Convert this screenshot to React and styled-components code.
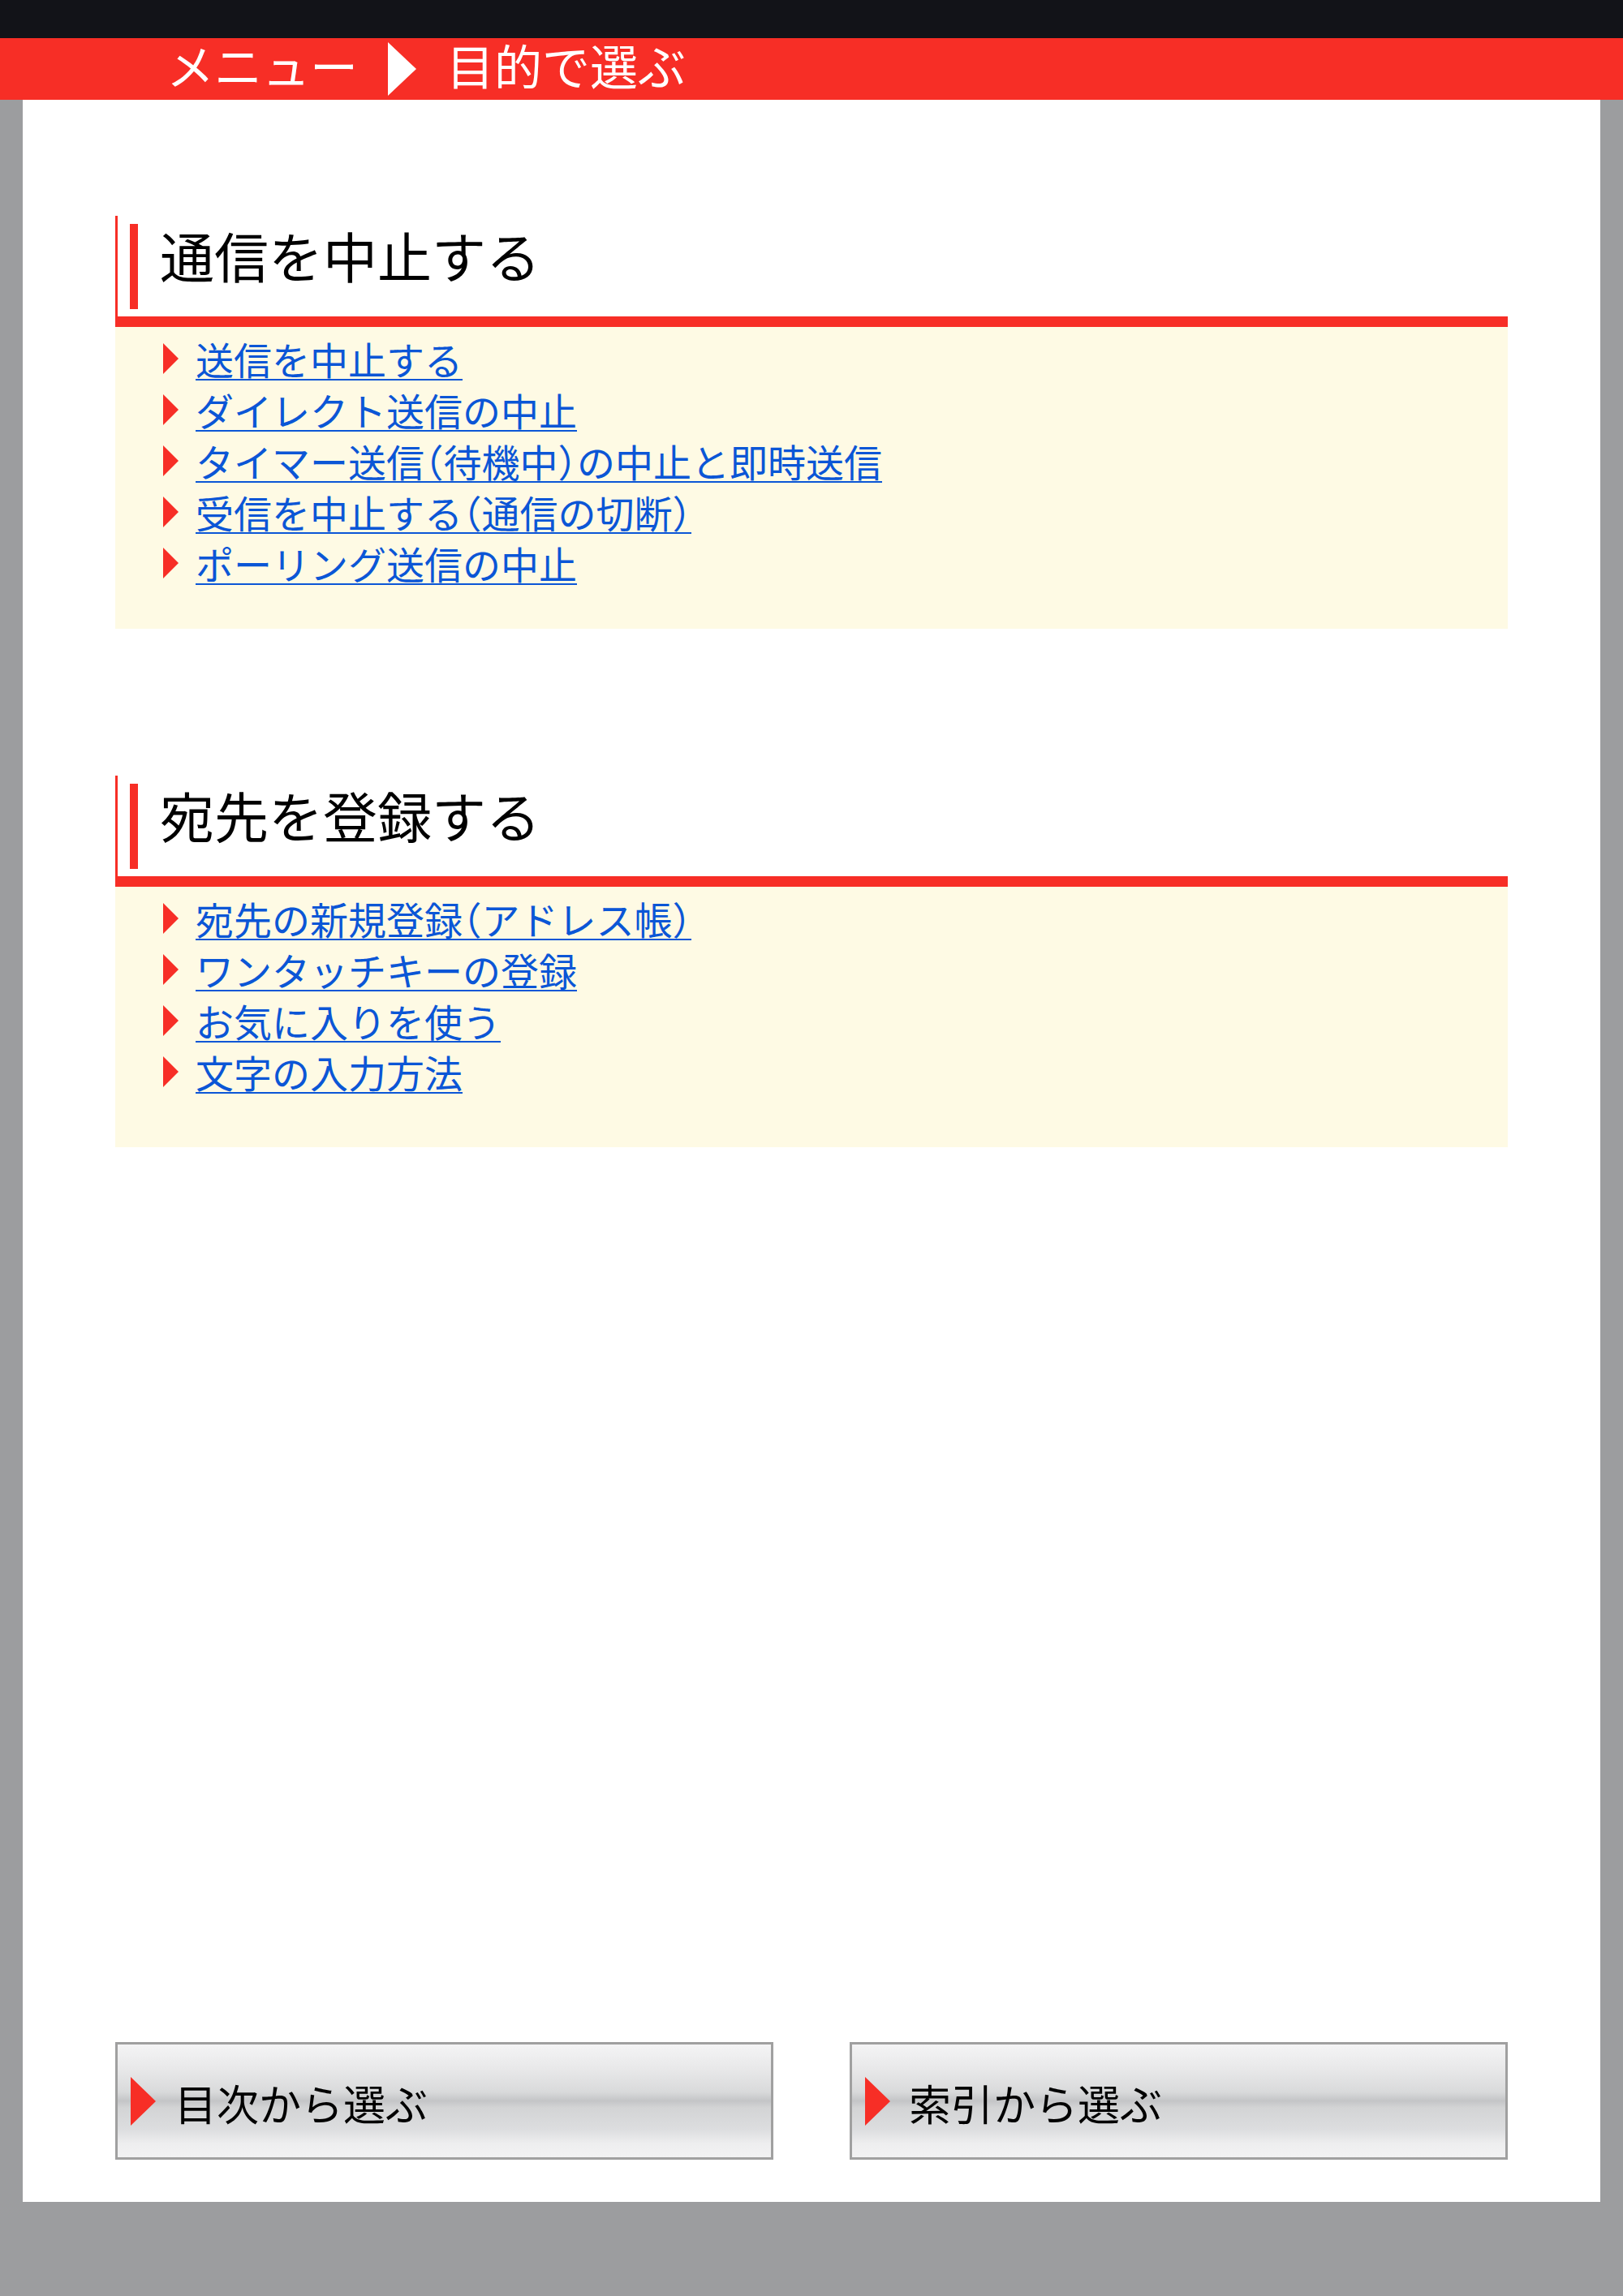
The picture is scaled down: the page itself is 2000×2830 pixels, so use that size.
import React from 'react';
import styled, { createGlobalStyle } from 'styled-components';

const RED = '#f72e26';
const JP = '"Noto Sans CJK JP", "Noto Sans", sans-serif';

const GlobalStyle = createGlobalStyle`
  html, body {
    margin: 0;
    padding: 0;
    background: #9c9d9f;
    font-family: ${JP};
  }
`;

const Page = styled.div`
  width: 2000px;
  height: 2830px;
  display: flex;
  flex-direction: column;
  background: #9c9d9f;
`;

const StatusBar = styled.div`
  height: 47px;
  background: #121318;
`;

const TitleBar = styled.div`
  height: 76px;
  box-sizing: border-box;
  background: ${RED};
  display: flex;
  align-items: center;
  padding: 0 0 12px 205px;
  color: #fff;
  font-size: 59px;
  line-height: 1;
`;

const Crumb = styled.span`
  display: block;
`;

const CrumbArrow = styled.span`
  width: 0;
  height: 0;
  margin: 12px 37px 0 37px;
  border-top: 33px solid transparent;
  border-bottom: 33px solid transparent;
  border-left: 35px solid #fff;
`;

const Frame = styled.div`
  padding: 0 28px;
`;

const Content = styled.main`
  height: 2591px;
  box-sizing: border-box;
  background: #fff;
  padding: 143px 114px 52px;
  display: flex;
  flex-direction: column;
`;

const Section = styled.section`
  margin-bottom: ${(p) => p.$gap || 0}px;
`;

const HeadingBox = styled.div`
  height: 124px;
  box-sizing: border-box;
  border-left: 3px solid ${RED};
  padding: 10px 0 9px 15px;
  display: flex;
  align-items: stretch;
`;

const HeadingBar = styled.div`
  width: 10px;
  background: ${RED};
`;

const HeadingText = styled.h2`
  margin: 0 0 0 27px;
  align-self: center;
  padding-bottom: 30px;
  font-size: 67px;
  font-weight: 400;
  line-height: 1;
  color: #000;
`;

const Rule = styled.div`
  height: 13px;
  background: ${RED};
`;

const LinkList = styled.ul`
  list-style: none;
  margin: 0;
  background: #fefae4;
  padding: 7px 0 ${(p) => p.$bottom}px 59px;
`;

const Item = styled.li`
  display: flex;
  align-items: center;
  height: 63px;
`;

const Marker = styled.span`
  width: 0;
  height: 0;
  margin-right: 21px;
  border-top: 19px solid transparent;
  border-bottom: 19px solid transparent;
  border-left: 19px solid ${RED};
`;

const ItemLink = styled.a`
  font-size: 47px;
  line-height: 1;
  color: #0b56d6;
  text-decoration: underline;
  text-decoration-thickness: 2px;
  text-underline-offset: 5px;
  font-feature-settings: "halt";
`;

const ButtonRow = styled.div`
  margin-top: auto;
  display: flex;
  gap: 94px;
`;

const NavButton = styled.button`
  width: 811px;
  height: 145px;
  box-sizing: border-box;
  border: 3px solid #a0a0a0;
  border-radius: 0;
  padding: 0 0 0 16px;
  display: flex;
  align-items: center;
  background: linear-gradient(
    to bottom,
    #f4f4f5 0%,
    #e8e8e9 22%,
    #d9dadb 42%,
    #c4c5c7 50%,
    #d3d4d5 56%,
    #dcdddf 75%,
    #eeeeef 88%,
    #f2f2f3 100%
  );
  font-family: ${JP};
  font-size: 52px;
  line-height: 1;
  color: #000;
  cursor: pointer;
`;

const ButtonMarker = styled.span`
  width: 0;
  height: 0;
  margin-right: 23px;
  border-top: 30px solid transparent;
  border-bottom: 30px solid transparent;
  border-left: 31px solid ${RED};
`;

const ButtonLabel = styled.span`
  padding-top: 4px;
`;

const sections = [
  {
    title: '通信を中止する',
    bottom: 50,
    gap: 181,
    links: [
      '送信を中止する',
      'ダイレクト送信の中止',
      'タイマー送信（待機中）の中止と即時送信',
      '受信を中止する（通信の切断）',
      'ポーリング送信の中止',
    ],
  },
  {
    title: '宛先を登録する',
    bottom: 62,
    gap: 0,
    links: ['宛先の新規登録（アドレス帳）', 'ワンタッチキーの登録', 'お気に入りを使う', '文字の入力方法'],
  },
];

const App = () => {
  return (
    <Page>
      <GlobalStyle />
      <StatusBar />
      <TitleBar>
        <Crumb>メニュー</Crumb>
        <CrumbArrow />
        <Crumb>目的で選ぶ</Crumb>
      </TitleBar>
      <Frame>
        <Content>
          {sections.map((section) => (
            <Section key={section.title} $gap={section.gap}>
              <HeadingBox>
                <HeadingBar />
                <HeadingText>{section.title}</HeadingText>
              </HeadingBox>
              <Rule />
              <LinkList $bottom={section.bottom}>
                {section.links.map((link) => (
                  <Item key={link}>
                    <Marker />
                    <ItemLink href="#">{link}</ItemLink>
                  </Item>
                ))}
              </LinkList>
            </Section>
          ))}
          <ButtonRow>
            <NavButton>
              <ButtonMarker />
              <ButtonLabel>目次から選ぶ</ButtonLabel>
            </NavButton>
            <NavButton>
              <ButtonMarker />
              <ButtonLabel>索引から選ぶ</ButtonLabel>
            </NavButton>
          </ButtonRow>
        </Content>
      </Frame>
    </Page>
  );
};

export default App;
